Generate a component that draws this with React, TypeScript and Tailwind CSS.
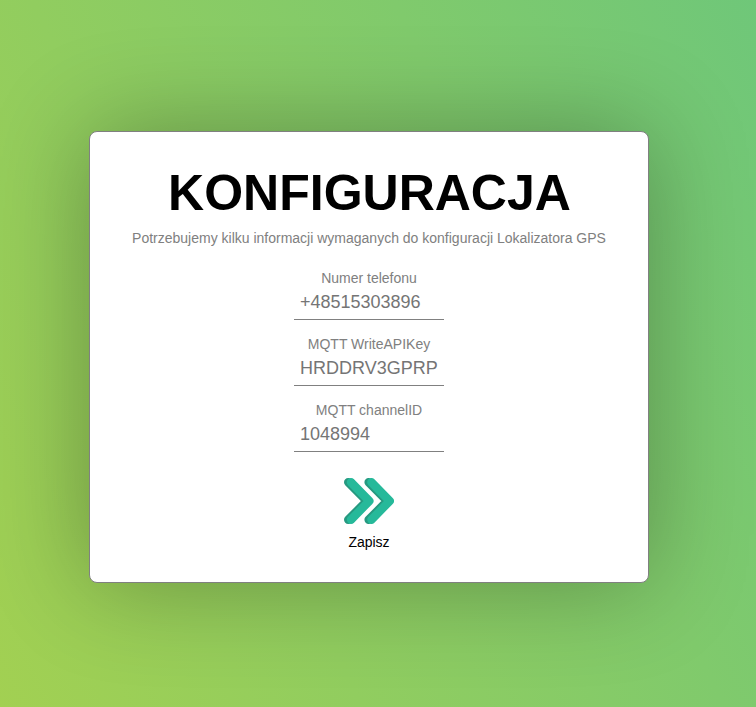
const fields = [
  { label: 'Numer telefonu', value: '+48515303896' },
  { label: 'MQTT WriteAPIKey', value: 'HRDDRV3GPRP' },
  { label: 'MQTT channelID', value: '1048994' },
];

function Chevron() {
  return (
    <g fill="none" strokeWidth="8.4" strokeLinecap="round" strokeLinejoin="round">
      <path stroke="#269980" d="M4.200 4.200L22.800 23L4.200 41.800" />
      <path stroke="#26b99a" d="M7 4.200L25.300 23L7 41.800" />
    </g>
  );
}

function Arrow() {
  return (
    <svg className="block" width="50" height="46" viewBox="0 0 50 46">
      <Chevron />
      <g transform="translate(20.4 0)">
        <Chevron />
      </g>
    </svg>
  );
}

export default function App() {
  return (
    <main className="flex h-[707px] justify-center overflow-hidden bg-linear-[65deg] from-[#a2d052] to-[#6fc779] pt-[131px] pr-[18px] font-['Liberation_Sans',Arial,sans-serif]">
      <section className="flex h-[452px] w-[560px] flex-col items-center rounded-lg border border-[#808080] bg-white pt-[30px] shadow-[0_0_100px_rgba(0,0,0,0.3)]">
        <h1 className="pl-px text-[50px] leading-[62px] font-bold text-black">KONFIGURACJA</h1>
        <p className="mt-[6px] text-sm leading-4 text-[#808080]">Potrzebujemy kilku informacji wymaganych do konfiguracji Lokalizatora GPS</p>
        <form className="mt-6 flex flex-col items-center">
          {fields.map((f) => (
            <label key={f.label} className="mb-4 flex h-[50px] w-[150px] flex-col text-center text-sm leading-4 text-[#808080]">
              {f.label}
              <input className="h-[34px] w-full border-b border-[#808080] px-[6px] pb-px text-lg text-[#757575] outline-none" defaultValue={f.value} />
            </label>
          ))}
          <button type="button" className="mt-[10px] flex flex-col items-center text-sm leading-4 text-black">
            <Arrow />
            <span className="mt-[10px]">Zapisz</span>
          </button>
        </form>
      </section>
    </main>
  );
}
